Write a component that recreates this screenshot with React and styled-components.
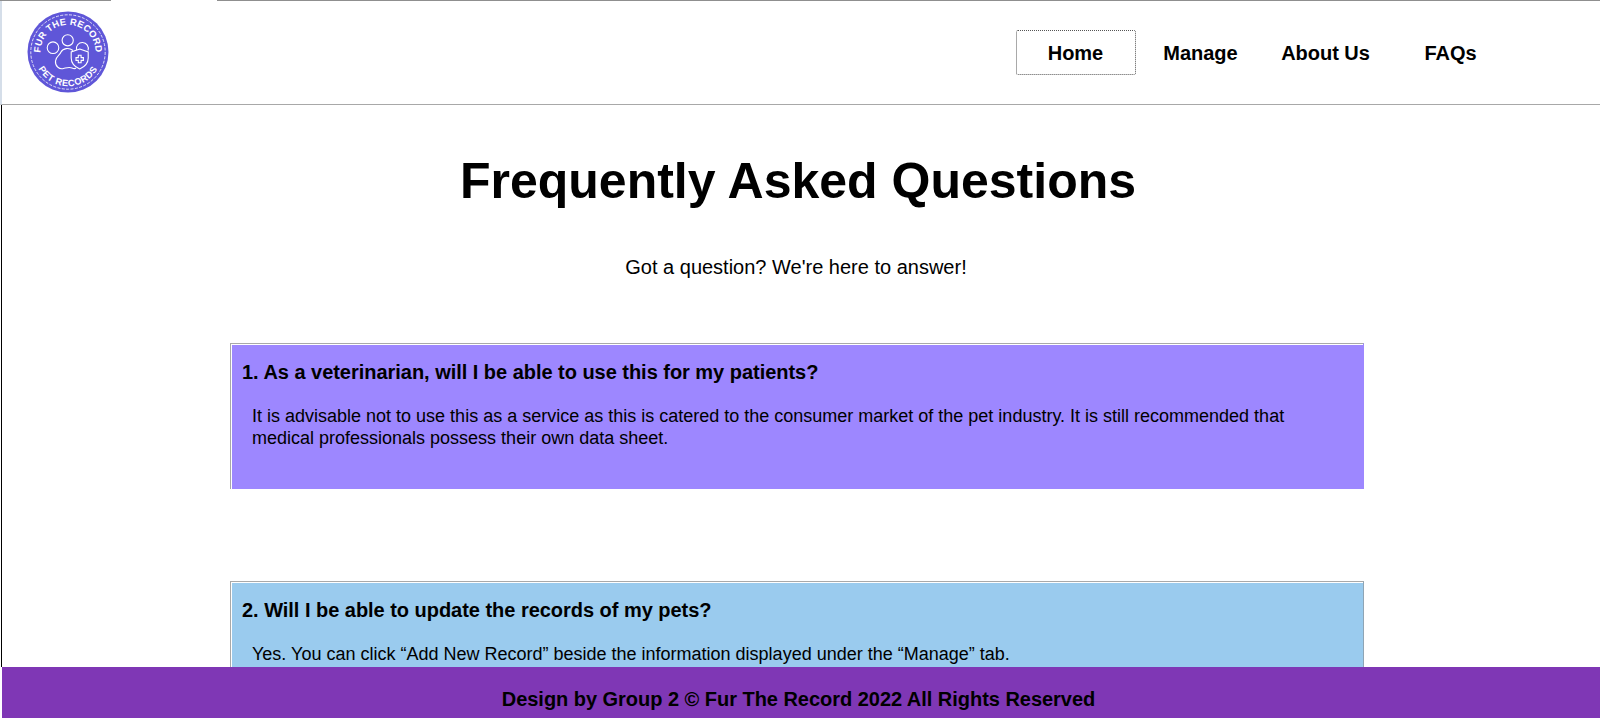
import React from "react";
import styled, { createGlobalStyle } from "styled-components";

const Global = createGlobalStyle`
  html, body { margin: 0; padding: 0; height: 100%; overflow: hidden; background: #fff; }
  body { font-family: "Liberation Sans", Arial, sans-serif; color: #000; }
`;
const Page = styled.div`
  height: 718px; display: flex; flex-direction: column; overflow: hidden;
`;
const TopRule = styled.div`
  height: 1px; flex: none;
  background: linear-gradient(to right, #8f8f8f 111px, #fff 111px, #fff 217px, #8f8f8f 217px);
`;
const Header = styled.header`
  flex: none; height: 104px; box-sizing: border-box;
  display: flex; align-items: center; justify-content: space-between;
  border-left: 2px solid #d5dee9; border-bottom: 1px solid #a8a8a8;
  padding: 0 87px 0 25px;
`;
const LogoMark = styled.svg`margin-bottom: 2px;`;
const Nav = styled.nav`display: flex; align-items: center;`;
const NavLink = styled.a`
  box-sizing: border-box; height: 45px; width: 125px; padding-top: 1px;
  display: flex; align-items: center; justify-content: center;
  font-size: 20px; font-weight: 700; color: #000; letter-spacing: -0.03px;
  ${p => p.$active && `
    width: 120px; margin: 0 2.5px; padding-top: 1px;
    border: 1px dotted #555; border-radius: 2px;
  `}
`;
const Main = styled.main`
  flex: 1; min-height: 0; overflow: hidden; margin-left: 1px;
  border-left: 1px solid #000; padding: 47px 236px 0 228px;
  display: flex; flex-direction: column;
`;
const Title = styled.h1`
  margin: 0; padding-left: 2px; text-align: center; font-size: 50px; line-height: 58px; font-weight: 700;
`;
const Subtitle = styled.p`
  margin: 46px 2px 0 0; text-align: center; font-size: 20px; line-height: 23px;
`;
const Card = styled.section`
  flex: none; box-sizing: border-box; height: ${p => p.$h}px; margin-top: ${p => p.$top}px;
  background: ${p => p.$bg};
  border-top: 1px solid #a9a9a9; border-left: 1px solid #a9a9a9; border-right: 1px solid ${p => p.$edge};
  box-shadow: inset 1px 1px 0 #fff;
  padding: 17px 10px 0 11px;
`;
const Question = styled.h2`
  margin: 0; font-size: 20px; line-height: 23px; font-weight: 700; letter-spacing: -0.03px;
`;
const Answer = styled.p`margin: 21px 30px 0 10px; font-size: 18px; line-height: 22px;`;
const Footer = styled.footer`
  flex: none; height: 51px; margin-left: 2px; background: #7f37b5;
  display: flex; align-items: center; justify-content: center;
  font-size: 20px; font-weight: 700; letter-spacing: -0.03px;
  padding: 14px 5px 0 0; box-sizing: border-box;
`;

const Logo = () => (
  <LogoMark width="82" height="82" viewBox="0 0 82 82" aria-label="Fur The Record logo">
    <defs>
      <path id="arcTop" d="M 13.5 45 A 27.7 27.7 0 1 1 68.5 45" />
      <path id="arcBottom" d="M 9.5 54 A 34 34 0 0 0 72.5 54" />
    </defs>
    <circle cx="41" cy="41" r="40.5" fill="#5f56d8" />
    <circle cx="41" cy="41" r="37.2" fill="none" stroke="#fff" strokeWidth="0.8" strokeDasharray="3 1.4" />
    <text fill="#fff" fontFamily="Liberation Sans" fontWeight="700" fontSize="9.4" letterSpacing="0.2">
      <textPath href="#arcTop" startOffset="50%" textAnchor="middle">FUR THE RECORD</textPath>
    </text>
    <text fill="#fff" fontFamily="Liberation Sans" fontWeight="700" fontSize="9.2" letterSpacing="0.5">
      <textPath href="#arcBottom" startOffset="50%" textAnchor="middle">PET RECORDS</textPath>
    </text>
    <g fill="none" stroke="#fff" strokeWidth="1.1">
      <circle cx="26" cy="36.7" r="5.8" />
      <circle cx="40.7" cy="29.3" r="5.6" />
      <path d="M49.5 39 A6 6 0 1 1 61 39.500" />
      <path d="M46 39.500 C42 36.500 36 37 34 41 C33 44 29 45 28.500 50 C28 55 32 58.500 36.500 57.500 C39 57 42 55.500 45 57 C47 58 48.500 57.500 49 57" />
      <path d="M52.700 38 l8.500 3 v6 c0 5.500 -3.500 8.800 -8.500 11 c-5 -2.200 -8.500 -5.500 -8.500 -11 v-6 z" />
      <path d="M51.300 44.300 h2.800 v2.300 h2.300 v2.800 h-2.300 v2.300 h-2.800 v-2.300 h-2.300 v-2.800 h2.300 z" />
    </g>
  </LogoMark>
);

export default function App() {
  return (
    <Page>
      <Global />
      <TopRule />
      <Header>
        <Logo />
        <Nav>
          <NavLink $active>Home</NavLink>
          <NavLink>Manage</NavLink>
          <NavLink>About Us</NavLink>
          <NavLink>FAQs</NavLink>
        </Nav>
      </Header>
      <Main>
        <Title>Frequently Asked Questions</Title>
        <Subtitle>Got a question? We're here to answer!</Subtitle>
        <Card $bg="#9d87ff" $edge="#9d87ff" $h={146} $top={64}>
          <Question>1. As a veterinarian, will I be able to use this for my patients?</Question>
          <Answer>It is advisable not to use this as a service as this is catered to the consumer market of the pet industry. It is still recommended that medical professionals possess their own data sheet.</Answer>
        </Card>
        <Card $bg="#9acbee" $edge="#8fa5b5" $h={146} $top={92}>
          <Question>2. Will I be able to update the records of my pets?</Question>
          <Answer>Yes. You can click “Add New Record” beside the information displayed under the “Manage” tab.</Answer>
        </Card>
      </Main>
      <Footer>Design by Group 2 © Fur The Record 2022 All Rights Reserved</Footer>
    </Page>
  );
}
